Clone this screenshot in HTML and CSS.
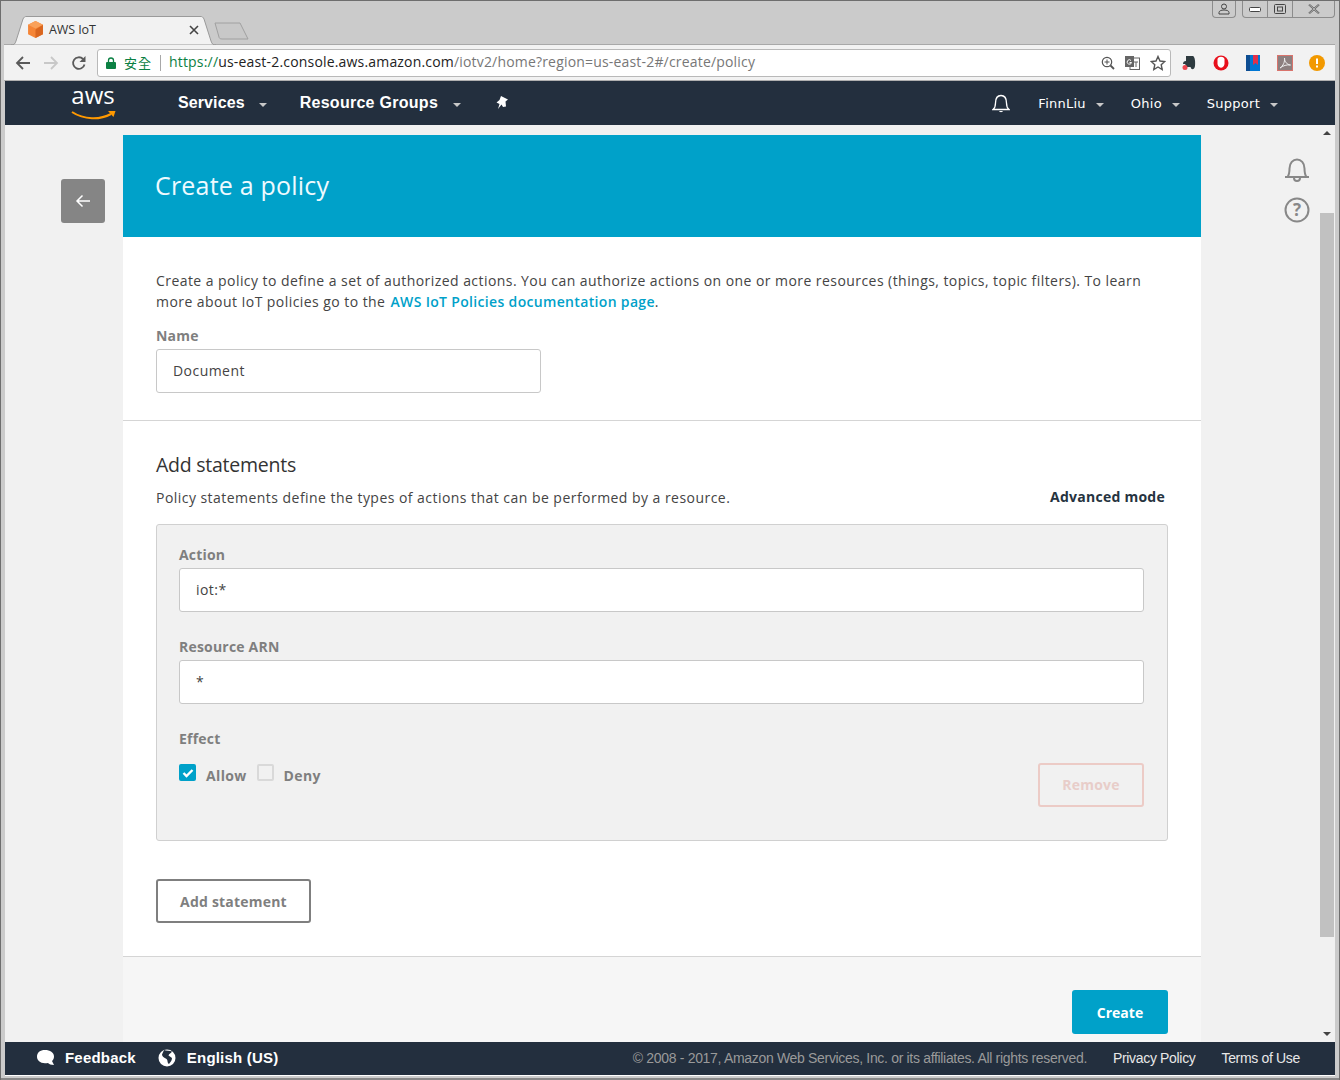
FILE: index.html
```html
<!DOCTYPE html>
<html lang="en">
<head>
<meta charset="utf-8">
<title>AWS IoT</title>
<link rel="stylesheet" href="styles.css">
</head>
<body>
<div class="window">
  <div class="tabstrip">
    <div class="tab">
      <svg class="tab-shape" viewBox="0 0 205 29" width="205" height="29"><path d="M0 29C3 29 4 28 5 25L12 3C13 1 14 .5 15 .5H190C191 .5 192 1 193 3L200 25C201 28 202 29 205 29z" fill="#f2f2f2" stroke="#9a9a9a"/></svg>
      <svg class="favicon" viewBox="0 0 16 16" width="17" height="17"><path d="M8 0l7 3.500v9L8 16l-7-3.500v-9z" fill="#f58536"/><path d="M8 8l7-4.500v9L8 16z" fill="#d9661f"/><path d="M8 0l7 3.500L8 7 1 3.500z" fill="#f9a15a"/></svg>
      <span class="tab-title">AWS IoT</span>
      <svg class="tab-close" viewBox="0 0 10 10" width="10" height="10"><path d="M1 1l8 8M9 1l-8 8" stroke="#444" stroke-width="1.600"/></svg>
    </div>
    <svg class="newtab" viewBox="0 0 36 18" width="36" height="18"><path d="M1 1h25l8 16H8c-2 0-3-1-3-2z" fill="#c8c8c8" stroke="#a0a0a0"/></svg>
    <div class="winctl">
      <div class="winbtn user"><svg viewBox="0 0 12 12" width="12" height="12"><circle cx="6" cy="3.500" r="2.500" fill="none" stroke="#444"/><path d="M1 11V9.500C1 8 3 7 6 7s5 1 5 2.500V11z" fill="none" stroke="#444"/></svg></div>
      <div class="wingroup">
        <div class="winbtn"><svg viewBox="0 0 14 8" width="14" height="8"><rect x="1.500" y="2.500" width="11" height="4" rx="1" fill="#fff" stroke="#444"/></svg></div>
        <div class="winbtn"><svg viewBox="0 0 12 10" width="12" height="10"><rect x=".5" y=".5" width="11" height="9" rx="1" fill="none" stroke="#444"/><rect x="3.500" y="3" width="5" height="4" fill="none" stroke="#444"/></svg></div>
        <div class="winbtn close"><svg viewBox="0 0 12 10" width="12" height="10"><path d="M1 .5l10 9M11 .5l-10 9" stroke="#555" stroke-width="1.800"/><path d="M1 .5l10 9M11 .5l-10 9" stroke="#eee" stroke-width=".6"/></svg></div>
      </div>
    </div>
  </div>
  <div class="toolbar">
    <svg class="tool" viewBox="0 0 16 16" width="16" height="16"><path d="M15 8H2M8 2L2 8l6 6" fill="none" stroke="#5a5a5a" stroke-width="1.800"/></svg>
    <svg class="tool" viewBox="0 0 16 16" width="16" height="16"><path d="M1 8h13M8 2l6 6-6 6" fill="none" stroke="#c8c8c8" stroke-width="1.800"/></svg>
    <svg class="tool" viewBox="0 0 16 16" width="16" height="16"><path d="M13.500 9.500A5.800 5.800 0 1 1 12 4" fill="none" stroke="#5a5a5a" stroke-width="1.800"/><path d="M14.500 1v6h-6z" fill="#5a5a5a"/></svg>
    <div class="omnibox">
      <svg class="lock" viewBox="0 0 10 12" width="10" height="12"><path d="M2.500 5V3.500a2.500 2.500 0 0 1 5 0V5" fill="none" stroke="#0b8043" stroke-width="1.300"/><rect y="5" width="10" height="7" rx="1" fill="#0b8043"/></svg>
      <span class="secure">安全</span>
      <span class="omni-sep"></span>
      <span class="url"><span class="scheme">https://</span><span class="host">us-east-2.console.aws.amazon.com</span><span class="path">/iotv2/home?region=us-east-2#/create/policy</span></span>
      <div class="omni-icons">
        <svg viewBox="0 0 14 14" width="14" height="14"><circle cx="6" cy="6" r="4.700" fill="none" stroke="#555" stroke-width="1.200"/><path d="M9.500 9.500L13 13" stroke="#555" stroke-width="1.800"/><path d="M3.500 6h5M6 3.500v5" stroke="#555"/></svg>
        <svg viewBox="0 0 15 14" width="15" height="14"><rect x="5" y="2" width="9.500" height="11.500" fill="#fff" stroke="#666"/><path d="M0 0h9v11H0z" fill="#666"/><path d="M6 4.500a2.200 2.200 0 1 0 .5 2H4.500" fill="none" stroke="#fff"/><path d="M9 6h4M11 6v5" stroke="#666"/></svg>
        <svg viewBox="0 0 16 16" width="16" height="16"><path d="M8 1.500l2 4.500 4.800.5-3.600 3.200 1 4.800L8 12l-4.200 2.500 1-4.800L1.200 6.500 6 6z" fill="none" stroke="#555" stroke-width="1.400"/></svg>
      </div>
    </div>
    <div class="extensions">
      <svg viewBox="0 0 16 16" width="16" height="16"><path d="M5 1h7c2 1 2.500 6 2 10-.5 3-2 3.500-3.500 3l-1-2H6L4 9H2c0-2 1-3 3-3z" fill="#2d3a3f"/><circle cx="4" cy="12.500" r="2.500" fill="#f0454f"/></svg>
      <svg viewBox="0 0 16 16" width="16" height="16"><ellipse cx="8" cy="8" rx="7.500" ry="7.500" fill="#e8101c"/><path d="M4.500 9V4c1-3 6-3 7 0v5c-1 5-6 5-7 0z" fill="#fff"/></svg>
      <svg viewBox="0 0 16 16" width="16" height="16"><rect x="1" width="14" height="16" fill="#0077d4"/><rect x="1" width="4" height="16" fill="#0d4d92"/><path d="M8 0h5v10l-2.500-2L8 10z" fill="#e0314b"/></svg>
      <svg viewBox="0 0 16 16" width="16" height="16"><rect x=".5" y=".5" width="15" height="15" fill="#8d7f7f" stroke="#d9736c"/><path d="M3 13c3-2 5-6 4.500-10 0 4 2.500 6.500 6 7-4-.5-7 .5-10.500 3z" fill="none" stroke="#eee"/></svg>
      <svg viewBox="0 0 16 16" width="16" height="16"><circle cx="8" cy="8" r="8" fill="#f29900"/><path d="M8 3.500v5.500M8 10.500v2" stroke="#fff" stroke-width="2"/></svg>
    </div>
  </div>
  <nav class="topnav">
    <div class="aws-logo">
      <span class="aws-word">aws</span>
      <svg class="aws-smile" viewBox="0 0 46 10" width="46" height="10"><path d="M1 2c12 8 28 8 39 2" fill="none" stroke="#f90" stroke-width="2"/><path d="M37 1l7.500 0-2 6z" fill="#f90"/></svg>
    </div>
    <a class="nav-main nav-services">Services<span class="caret"></span></a>
    <a class="nav-main nav-groups">Resource Groups<span class="caret"></span></a>
    <svg class="pin" viewBox="0 0 14 14" width="14" height="14"><path d="M5 0l7 3.500-2.500 2 .5 5-3 .5-1.500-2.500L2 13l1.500-5L.5 6.500l3-2.500z" fill="#fff"/></svg>
    <div class="nav-right">
      <svg class="nav-bell" viewBox="0 0 18 20" width="18" height="20"><path d="M1 15.500h16c-2-1.500-2.500-3-2.500-6.500C14.500 4 12 1.500 9 1.500S3.500 4 3.500 9c0 3.500-.5 5-2.500 6.500z" fill="none" stroke="#fff" stroke-width="1.300"/><path d="M7 17c.5 1.500 3.500 1.500 4 0z" fill="#fff"/></svg>
      <a class="nav-sec nav-user">FinnLiu<span class="caret"></span></a>
      <a class="nav-sec nav-region">Ohio<span class="caret"></span></a>
      <a class="nav-sec">Support<span class="caret"></span></a>
    </div>
  </nav>
  <div class="content">
    <div class="left-rail">
      <button class="back"><svg viewBox="0 0 16 14" width="16" height="14"><path d="M15 7H2M7.500 1.500L2 7l5.500 5.500" fill="none" stroke="#fff" stroke-width="1.500"/></svg></button>
    </div>
    <main class="card">
      <header class="card-head"><h1>Create a policy</h1></header>
      <section class="intro">
        <p>Create a policy to define a set of authorized actions. You can authorize actions on one or more resources (things, topics, topic filters). To learn more about IoT policies go to the <a class="link">AWS IoT Policies documentation page</a>.</p>
        <label class="field-label name-label">Name</label>
        <div class="input name-input">Document</div>
      </section>
      <section class="statements">
        <h2>Add statements</h2>
        <div class="sub-row">
          <span>Policy statements define the types of actions that can be performed by a resource.</span>
          <a class="advanced">Advanced mode</a>
        </div>
        <div class="statement">
          <label class="field-label">Action</label>
          <div class="input">iot:*</div>
          <label class="field-label gap-label">Resource ARN</label>
          <div class="input">*</div>
          <label class="field-label gap-label">Effect</label>
          <div class="effect-row">
            <span class="check on"><svg viewBox="0 0 12 10" width="12" height="10"><path d="M1.500 5l3 3 6-6" fill="none" stroke="#fff" stroke-width="2.400"/></svg></span>
            <span class="check-label">Allow</span>
            <span class="check"></span>
            <span class="check-label">Deny</span>
            <button class="remove">Remove</button>
          </div>
        </div>
        <button class="add">Add statement</button>
      </section>
      <section class="card-foot"><button class="create">Create</button></section>
    </main>
    <aside class="right-rail">
      <svg viewBox="0 0 26 24" width="26" height="24"><path d="M1 19h24" stroke="#888" stroke-width="2"/><path d="M3.500 19c1.500-2 2-4 2-8.500C5.500 5 9 1.500 13 1.500s7.500 3.500 7.500 9c0 4.500.5 6.500 2 8.500" fill="none" stroke="#888" stroke-width="2"/><path d="M10 20c0 4 6 4 6 0" fill="none" stroke="#888" stroke-width="2"/></svg>
      <svg viewBox="0 0 26 26" width="26" height="26"><circle cx="13" cy="13" r="11.500" fill="none" stroke="#888" stroke-width="2"/><text x="13" y="19" text-anchor="middle" class="help-q">?</text></svg>
    </aside>
    <div class="scrollbar">
      <span class="arrow up"></span>
      <div class="track"><div class="thumb"></div></div>
      <span class="arrow down"></span>
    </div>
  </div>
  <footer class="foot">
    <svg class="foot-chat" viewBox="0 0 20 18" width="20" height="18"><path d="M9 1c5 0 9 2.500 9 6.500 0 2-1 3.500-2 4.500l2 4c-3 0-5-1-6-2-1 .3-2 .3-3 .3-5 0-8-3-8-6.500C1 3.500 4 1 9 1z" fill="#fff"/></svg>
    <span class="foot-strong feedback">Feedback</span>
    <svg class="foot-globe" viewBox="0 0 18 18" width="18" height="18"><circle cx="9" cy="9" r="8.500" fill="#fff"/><path d="M6 1c2 1 6 .5 8 1.500-1 2-3 2-3.500 4L14 9c0 3-2 4-3 6-2-1-1-4-2.500-5S4 8 4 5.500z" fill="#232f3e"/></svg>
    <span class="foot-strong english">English (US)</span>
    <span class="foot-copy">© 2008 - 2017, Amazon Web Services, Inc. or its affiliates. All rights reserved.</span>
    <a class="foot-link privacy">Privacy Policy</a>
    <a class="foot-link">Terms of Use</a>
  </footer>
</div>
</body>
</html>
```
FILE: styles.css
```css
* { box-sizing: border-box; }
html, body { margin: 0; padding: 0; height: 100%; overflow: hidden; }
body { font-family: "Open Sans", "Noto Sans", sans-serif; background: #c9c9c9; }
button { font-family: inherit; cursor: pointer; }
h1, h2, p { margin: 0; }

.window {
  width: 1340px; height: 1080px;
  display: flex; flex-direction: column;
  background: #cbcbcb;
  border: 1px solid #6e6e6e;
  border-bottom: 0;
  padding: 0 4px 4px 3px;
  box-shadow: inset 0 -2px 0 #888;
  overflow: hidden;
}

.tabstrip { height: 43px; flex: none; display: flex; align-items: flex-end; position: relative; }
.tab {
  width: 205px; height: 29px; margin-left: 7px; margin-bottom: -1px;
  display: flex; align-items: center;
  position: relative; z-index: 1;
  padding-left: 16px;
  padding-bottom: 2px;
}
.tab-shape { position: absolute; left: 0; top: 0; z-index: -1; }
.favicon { flex: none; }
.tab-title { font: 12.500px "Open Sans", sans-serif; color: #333; margin-left: 5px; flex: 1; letter-spacing: -.1px; }
.tab-close { margin-right: 17px; }
.newtab { margin: 0 0 4px -2px; }
.winctl { position: absolute; top: 0; right: 0; display: flex; gap: 6px; }
.winbtn {
  height: 17px; width: 24px; display: flex; align-items: center; justify-content: center;
  border: 1px solid #8c8c8c; border-top: 0; border-radius: 0 0 4px 4px;
}
.wingroup { display: flex; border: 1px solid #8c8c8c; border-top: 0; border-radius: 0 0 4px 4px; height: 17px; width: 93px; }
.wingroup .winbtn { border: 0; border-right: 1px solid #8c8c8c; border-radius: 0; height: 16px; width: 25px; flex: none; }
.wingroup .winbtn.close { border-right: 0; flex: 1; }

.toolbar {
  height: 37px; flex: none; display: flex; align-items: center;
  background: #f2f2f2; padding: 0 0 0 11px;
  border-top: 1px solid #a8a8a8;
  border-bottom: 1px solid #b0b0b0;
}
.tool { margin-right: 12px; flex: none; }
.omnibox {
  width: 1074px; height: 28px; margin-left: -2px; flex: none;
  display: flex; align-items: center;
  background: #fff; border: 1px solid #b9b9b9; border-radius: 3px;
  padding-left: 8px;
}
.secure { font: 13px "Noto Sans CJK TC", sans-serif; color: #0b8043; margin-left: 8px; letter-spacing: 1px; }
.omni-sep { width: 1px; height: 16px; background: #a8a8a8; margin: 0 8px 0 8px; }
.url { font: 14px/18px "Open Sans", sans-serif; letter-spacing: .18px; white-space: nowrap; margin-top: -2px; }
.scheme { color: #0b8043; }
.host { color: #222; }
.path { color: #777; }
.omni-icons { margin-left: auto; display: flex; align-items: center; gap: 10px; padding-right: 4px; }
.extensions { display: flex; align-items: center; gap: 16px; margin-left: 10px; }

.topnav {
  height: 44px; flex: none; display: flex; align-items: center;
  background: #232f3e; margin-left: 1px; color: #fff;
}
.aws-logo { width: 46px; margin-left: 66px; position: relative; height: 36px; display: flex; flex-direction: column; align-items: center; }
.aws-word { font: 400 24px/26px "Open Sans", sans-serif; color: #fff; margin-top: -3px; padding-right: 2px; }
.aws-smile { position: absolute; left: 0; top: 25px; }
.nav-main { font: 700 16px "Liberation Sans", Arial, sans-serif; display: flex; align-items: center; }
.nav-services { margin-left: 61px; letter-spacing: .1px; }
.nav-groups { margin-left: 33px; letter-spacing: .28px; }
.caret { width: 0; height: 0; border: 4.500px solid transparent; border-top: 4px solid #c8c8c8; border-bottom: 0; margin-left: 14px; margin-top: 3px; }
.nav-groups .caret { margin-left: 15px; }
.pin { margin-left: 35px; }
.nav-right { margin-left: auto; display: flex; align-items: center; padding-right: 57px; }
.nav-bell { margin-top: 1px; }
.nav-sec { font: 13px "DejaVu Sans", Verdana, sans-serif; letter-spacing: .25px; display: flex; align-items: center; margin-left: 27px; }
.nav-sec .caret { margin-left: 10px; }
.nav-user { margin-left: 28px; }

.content { flex: 1; min-height: 0; display: flex; background: #f1f1f1; margin-left: 1px; overflow: hidden; }
.left-rail { width: 118px; flex: none; padding: 54px 0 0 56px; }
.back {
  width: 44px; height: 44px; border: 0; border-radius: 3px; background: #858585;
  display: flex; align-items: center; justify-content: center; padding: 0;
}
.card { width: 1078px; flex: none; margin-top: 10px; background: #fff; align-self: flex-start; }
.card-head { height: 102px; background: #00a1c9; display: flex; align-items: center; padding: 0 0 2px 32px; }
.card-head h1 { font-size: 25px; font-weight: 400; color: #eefaff; letter-spacing: .2px; }
.intro { height: 184px; padding: 33px 33px 0; border-bottom: 1px solid #d5d5d5; font-size: 14px; color: #444; line-height: 21px; }
.intro p { letter-spacing: .44px; }
.link { color: #00a1c9; font-weight: 600; letter-spacing: .33px; margin-left: 1px; }
.field-label { display: block; font-size: 14px; font-weight: 700; color: #7f7f7f; line-height: 20px; letter-spacing: .2px; }
.name-label { margin-top: 14px; margin-bottom: 3px; }
.input {
  height: 44px; background: #fff; border: 1px solid #c8c8c8; border-radius: 3px;
  padding: 0 16px 2px; display: flex; align-items: center; font-size: 14px; color: #444; letter-spacing: .45px;
}
.name-input { width: 385px; }
.statements { height: 535px; padding: 31px 33px 0; }
.statements h2 { font-size: 19.500px; font-weight: 400; color: #333; line-height: 26px; letter-spacing: -.25px; }
.sub-row { display: flex; justify-content: space-between; font-size: 14px; color: #444; margin-top: 9px; padding-right: 3px; line-height: 22px; letter-spacing: .46px; }
.advanced { font-weight: 700; color: #263340; letter-spacing: .25px; margin-top: -1px; }
.statement {
  width: 1012px; height: 317px; margin-top: 15px;
  background: #f1f1f1; border: 1px solid #d0d0d0; border-radius: 3px;
  padding: 20px 23px 0 22px;
}
.statement .field-label { margin-bottom: 3px; }
.gap-label { margin-top: 25px; }
.effect-row { display: flex; align-items: flex-start; margin-top: 15px; position: relative; }
.check {
  width: 17px; height: 17px; border: 2px solid #d9d9d9; border-radius: 2px; background: #f1f1f1;
  display: flex; align-items: center; justify-content: center; flex: none;
}
.check.on { background: #00a1c9; border-color: #00a1c9; }
.check-label { font-size: 14px; font-weight: 700; color: #7f7f7f; margin: 2px 10px 0 10px; line-height: 20px; letter-spacing: .35px; }
.check-label + .check + .check-label { margin-right: 0; }
.remove {
  position: absolute; right: 0; top: -1px;
  width: 106px; height: 44px; padding: 0 0 2px;
  background: transparent; border: 2px solid #eccbc6; border-radius: 3px;
  color: #e8cdc9; font-size: 14px; font-weight: 700; letter-spacing: .2px;
}
.add {
  display: block; margin-top: 38px; width: 155px; height: 44px;
  background: #fff; border: 2px solid #7f7f7f; border-radius: 3px;
  color: #7f7f7f; font-size: 14px; font-weight: 700; letter-spacing: .2px;
}
.card-foot { height: 100px; background: #f6f6f6; border-top: 1px solid #d5d5d5; display: flex; justify-content: flex-end; align-items: flex-start; padding: 33px 33px 0 0; }
.create { width: 96px; height: 44px; border: 0; border-radius: 3px; background: #00a1c9; color: #fff; font-size: 14px; font-weight: 700; }
.right-rail { width: 119px; flex: none; display: flex; flex-direction: column; align-items: flex-start; gap: 15px; padding: 33px 0 0 83px; }
.help-q { font: 700 17px "Open Sans", sans-serif; fill: #888; }
.scrollbar { width: 14px; flex: none; margin-right: 1px; display: flex; flex-direction: column; align-items: center; }
.track { flex: 1; width: 14px; padding-top: 72px; padding-bottom: 89px; min-height: 0; display: flex; }
.thumb { flex: 1; background: #c1c1c1; }
.arrow { width: 0; height: 0; border: 4px solid transparent; flex: none; margin: 6px 0; }
.arrow.up { border-top: 0; border-bottom: 4px solid #444; }
.arrow.down { border-bottom: 0; border-top: 4px solid #444; }

.foot {
  height: 34px; flex: none; margin-left: 1px; background: #232f3e; color: #fff;
  display: flex; align-items: center; padding: 0 35px 2px 31px;
  border-bottom: 1px solid #fff;
}
.foot-strong { font: 700 15px "Liberation Sans", Arial, sans-serif; margin-left: 9px; letter-spacing: .2px; }
.feedback { margin-right: 22px; }
.english { margin-left: 11px; letter-spacing: .2px; }
.foot-copy { font: 14px "Liberation Sans", Arial, sans-serif; color: #9a9a9a; margin-left: auto; letter-spacing: -.32px; }
.foot-link { font: 14px "Liberation Sans", Arial, sans-serif; color: #e8e8e8; letter-spacing: -.33px; margin-left: 26px; }
.privacy { margin-left: 26px; }
```
